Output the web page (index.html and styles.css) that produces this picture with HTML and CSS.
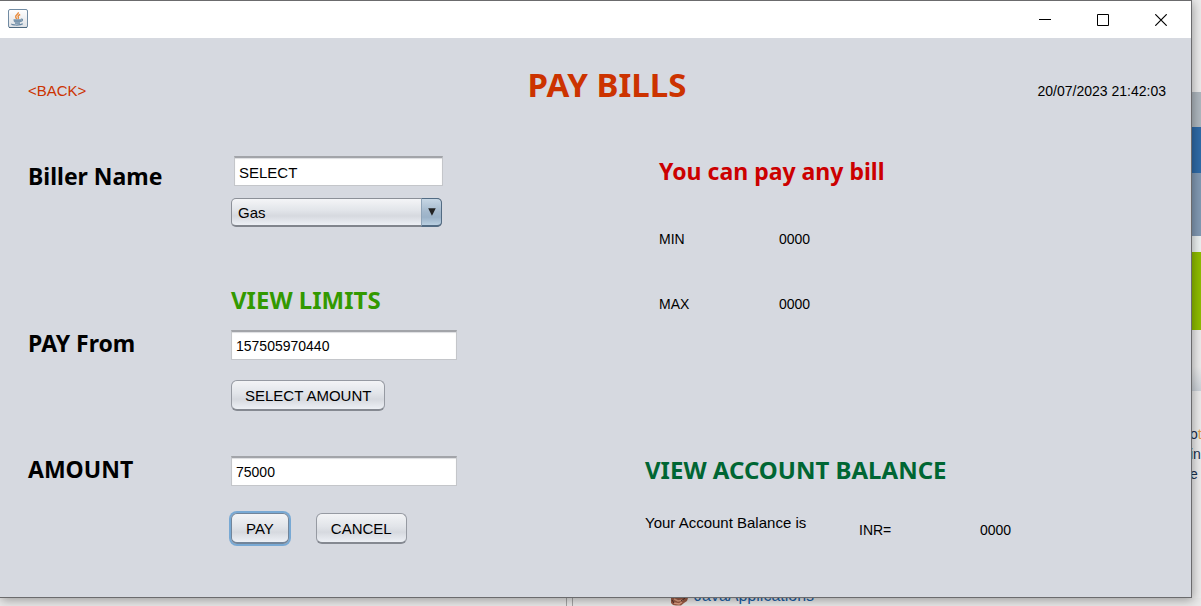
FILE: index.html
```html
<!DOCTYPE html>
<html lang="en">
<head>
<meta charset="utf-8">
<title>Pay Bills</title>
<link rel="stylesheet" href="styles.css">
</head>
<body>
<div class="desktop">
  <main class="window">
    <div class="titlebar">
      <svg class="app-icon" viewBox="0 0 20 20" width="20" height="20" aria-hidden="true">
        <defs><linearGradient id="tile" x1="0" y1="0" x2="0" y2="1"><stop offset="0" stop-color="#fff"/><stop offset="1" stop-color="#dde0e4"/></linearGradient></defs>
        <rect x=".5" y=".5" width="19" height="18" rx="1.5" fill="url(#tile)" stroke="#718ba3"/>
        <path d="M1 18.5h18" stroke="#4e6980"/>
        <path d="M10.3 3.2c.6 1.8-3 2.7-2.6 4.7.1.9.8 1.3 1 2.100M12.200 5.500c-2 .8-2.600 1.700-1.900 2.700.4.7.2 1.200-.4 1.700" fill="none" stroke="#e88b3c" stroke-width="1.400"/>
        <path d="M5.500 10.300h7.500v1.200c0 1.500-1 2-1.500 2H7.200c-1 0-1.700-.8-1.700-3.200z" fill="#7995ad"/>
        <path d="M13 10.300c2-.6 2 2-.7 2.200M3.800 14.700c-1 1.600 8.500 1.900 11 .1M7 14.200h5" fill="none" stroke="#6686a2" stroke-width="1.200"/>
      </svg>
      <div class="window-controls">
        <button type="button" aria-label="Minimize"><svg width="12" height="12" viewBox="0 0 12 12"><path d="M0 5.500h12" stroke="#000"/></svg></button>
        <button type="button" aria-label="Maximize"><svg width="12" height="12" viewBox="0 0 12 12"><path d="M.5.5h11v11H.5z" fill="none" stroke="#000"/></svg></button>
        <button type="button" aria-label="Close"><svg width="12" height="12" viewBox="0 0 12 12"><path d="M.3.3l11.400 11.400M11.700.3L.3 11.700" stroke="#000" stroke-width="1.200"/></svg></button>
      </div>
    </div>

    <form class="content">
      <header class="header">
        <a class="back" href="#">&lt;BACK&gt;</a>
        <h1 class="title">PAY BILLS</h1>
        <time class="clock">20/07/2023 21:42:03</time>
      </header>

      <div class="columns">
        <div class="fields">
          <section class="field biller">
            <label class="heading" for="biller">Biller Name</label>
            <div class="controls">
              <input class="text-box inset" id="biller" type="text" value="SELECT">
              <div class="combo">
                <select aria-label="Biller type"><option>Gas</option></select>
                <svg class="combo-arrow" width="20" height="26" viewBox="0 0 20 26" aria-hidden="true"><path d="M6.500 9h8l-4 8z" fill="#222"/></svg>
              </div>
            </div>
          </section>

          <h2 class="heading section-title limits">VIEW LIMITS</h2>

          <section class="field from">
            <label class="heading" for="account">PAY From</label>
            <div class="controls wide">
              <input class="text-box" id="account" type="text" value="157505970440">
              <button class="button" type="button">SELECT AMOUNT</button>
            </div>
          </section>

          <section class="field amount">
            <label class="heading" for="amount">AMOUNT</label>
            <div class="controls wide">
              <input class="text-box" id="amount" type="text" value="75000">
              <div class="actions">
                <button class="button focused" type="button">PAY</button>
                <button class="button" type="button">CANCEL</button>
              </div>
            </div>
          </section>
        </div>

        <div class="info">
          <section class="rules">
            <h2 class="heading notice">You can pay any bill</h2>
            <dl class="range">
              <dt>MIN</dt><dd>0000</dd>
              <dt>MAX</dt><dd>0000</dd>
            </dl>
          </section>
          <section class="balance">
            <h2 class="heading section-title balance-title">VIEW ACCOUNT BALANCE</h2>
            <div class="balance-row">
              <span class="balance-label">Your Account Balance is</span>
              <span class="currency">INR=</span>
              <span class="value">0000</span>
            </div>
          </section>
        </div>
      </div>
    </form>
  </main>

  <aside class="side">
    <div class="band grey"></div>
    <div class="band blue"></div>
    <div class="band slate"></div>
    <div class="band pale"></div>
    <div class="band green"></div>
    <div class="band fade"></div>
    <p class="snippet"><span>o</span><b>t</b><br><span>in</span><br><span>e</span> <b>o</b></p>
  </aside>

  <footer class="below">
    <div class="pane"></div>
    <div class="tree">
      <svg width="20" height="8" viewBox="0 0 20 8" aria-hidden="true"><path d="M1 0h17l-1 3-3 2-3 2.500H6L3 7 1 5z" fill="#9b5b45"/><path d="M4 1l4 2 5-1M4 5l5 1 3-2" fill="none" stroke="#dfa183" stroke-width="1.500"/><path d="M2 2l2 3M15 0l-4 3" stroke="#4e2e28"/></svg>
      <a href="#">JavaApplications</a>
    </div>
  </footer>
</div>
</body>
</html>
```

FILE: styles.css
```css
* { box-sizing: border-box; }

body {
  margin: 0;
  font: 14px/18px "Liberation Sans", Arial, sans-serif;
  color: #000;
  background: #ebebeb;
}

h1, h2, p, dl, dd { margin: 0; }

.desktop {
  display: grid;
  grid-template-columns: minmax(0, 1fr) 9px;
  grid-template-rows: 1fr 8px;
  min-height: 100vh;
}

.window {
  position: relative;
  z-index: 1;
  display: flex;
  flex-direction: column;
  background: #d6d9e0;
  border: solid #6b6b6d;
  border-width: 1px 1px 1px 0;
  box-shadow: 1px 2px 10px rgba(0, 0, 0, 0.35);
}

.titlebar {
  display: flex;
  justify-content: space-between;
  align-items: center;
  height: 37px;
  padding-left: 8px;
  background: #fff;
}

.app-icon { margin-bottom: 1px; }

.window-controls { display: flex; padding-right: 1px; }

.window-controls button {
  display: grid;
  place-items: center;
  width: 58px;
  height: 36px;
  padding: 0;
  border: 0;
  background: none;
}

.heading { font: bold 23px/28px "Noto Sans", Tahoma, sans-serif; }
.section-title { font-size: 24px; }

.header {
  display: grid;
  grid-template-columns: 1fr auto 1fr;
  align-items: center;
  padding: 27px 25px 0 28px;
}

.back {
  padding-top: 11px;
  font-size: 15px;
  color: #cc3300;
  text-decoration: none;
}

.title {
  padding-left: 20px;
  font: bold 33px/40px "Noto Sans", Tahoma, sans-serif;
  color: #cc3300;
}

.clock { justify-self: end; padding-top: 11px; }

.columns {
  display: grid;
  grid-template-columns: 617fr 546fr;
  padding: 51px 0 0 28px;
}

.field {
  display: grid;
  grid-template-columns: 203px 1fr;
}

.biller .heading { padding-top: 6px; }

.from .heading,
.amount .heading { margin-top: -1px; }

.controls { display: flex; flex-direction: column; width: 211px; }
.wide { width: 226px; }

.text-box {
  width: 100%;
  height: 30px;
  padding: 1px 4px 0;
  font: inherit;
  border: 1px solid #c4c6ca;
  border-top: 2px solid #a2a4a9;
  background: #fff;
  box-shadow: inset 0 1px 1px #dcdde0;
}

.inset { width: auto; margin: 0 -1px 0 3px; font-size: 15px; }

.combo { display: grid; margin-top: 12px; }

.combo select {
  grid-area: 1 / 1;
  appearance: none;
  height: 29px;
  padding: 2px 6px 0;
  font: inherit;
  font-size: 15px;
  color: #000;
  border: 1px solid #8c9098;
  border-bottom: 2px solid #81858d;
  border-radius: 5px;
  background: linear-gradient(#f4f5f7, #e1e4e9 45%, #d6d9df 65%, #edf0f5);
}

.combo-arrow {
  grid-area: 1 / 1;
  justify-self: end;
  align-self: stretch;
  width: 21px;
  height: 29px;
  border: 1px solid #526b83;
  border-left-color: #8fa4b8;
  border-bottom-width: 2px;
  border-radius: 0 5px 5px 0;
  background: linear-gradient(#c7d7e5, #a3b8cc 50%, #9bb2c8 70%, #bad0e2);
  pointer-events: none;
}

.limits { padding: 59px 0 16px 203px; color: #339900; }

.from .button { margin-top: 20px; }
.amount { margin-top: 45px; }

.button {
  align-self: flex-start;
  height: 31px;
  padding: 2px 13px 0;
  font: inherit;
  font-size: 15px;
  color: #000;
  border: 1px solid #969aa2;
  border-bottom: 2px solid #858991;
  border-radius: 6px;
  background: linear-gradient(#f3f4f6, #e1e4e9 45%, #d6d9df 65%, #edf0f5);
}

.focused { border-color: #72859a; box-shadow: 0 0 0 2px #78a9d4; }

.actions { display: flex; gap: 27px; margin-top: 27px; }
.actions .button { padding: 2px 14px 0; }

.info { display: flex; flex-direction: column; justify-content: space-between; }

.rules { padding-left: 14px; }
.notice { padding-top: 1px; color: #cc0000; }

.range {
  display: grid;
  grid-template-columns: 120px 1fr;
  row-gap: 47px;
  padding-top: 45px;
}

.balance-title { color: #006633; }

.balance-row {
  display: grid;
  grid-template-columns: 214px 121px 1fr;
  align-items: end;
  padding: 30px 0 5px;
}

.balance-label { padding-bottom: 7px; font-size: 15px; }

.side {
  height: 0;
  min-height: 100%;
  padding-top: 92px;
  overflow: hidden;
  background: #ececec;
}

.grey { height: 35px; background: #afb8bf; }
.blue { height: 46px; background: #2f6ba8; }
.slate { height: 63px; background: #829ab4; }
.pale { height: 16px; background: #edf2f2; }
.green { height: 78px; background: #8fbd00; }
.fade { height: 61px; background: linear-gradient(#ececec 60%, #cbd1d8); }

.snippet {
  margin-left: -2px;
  padding-top: 33px;
  font-size: 14px;
  line-height: 20px;
  white-space: nowrap;
  color: #18304e;
}

.snippet b { font-weight: normal; color: #e69b4b; }

.below {
  grid-column: 1 / -1;
  display: flex;
  height: 8px;
  overflow: hidden;
  background: #e9e9e9;
}

.pane {
  flex: 0 1 567px;
  border-right: 1px solid #a5a5a5;
}

.tree {
  display: flex;
  align-items: flex-end;
  gap: 4px;
  margin-left: 5px;
  padding-left: 97px;
  border-left: 1px solid #a5a5a5;
}

.tree a {
  font-size: 16px;
  line-height: 20px;
  color: #1a61a8;
  text-decoration: none;
}
```
